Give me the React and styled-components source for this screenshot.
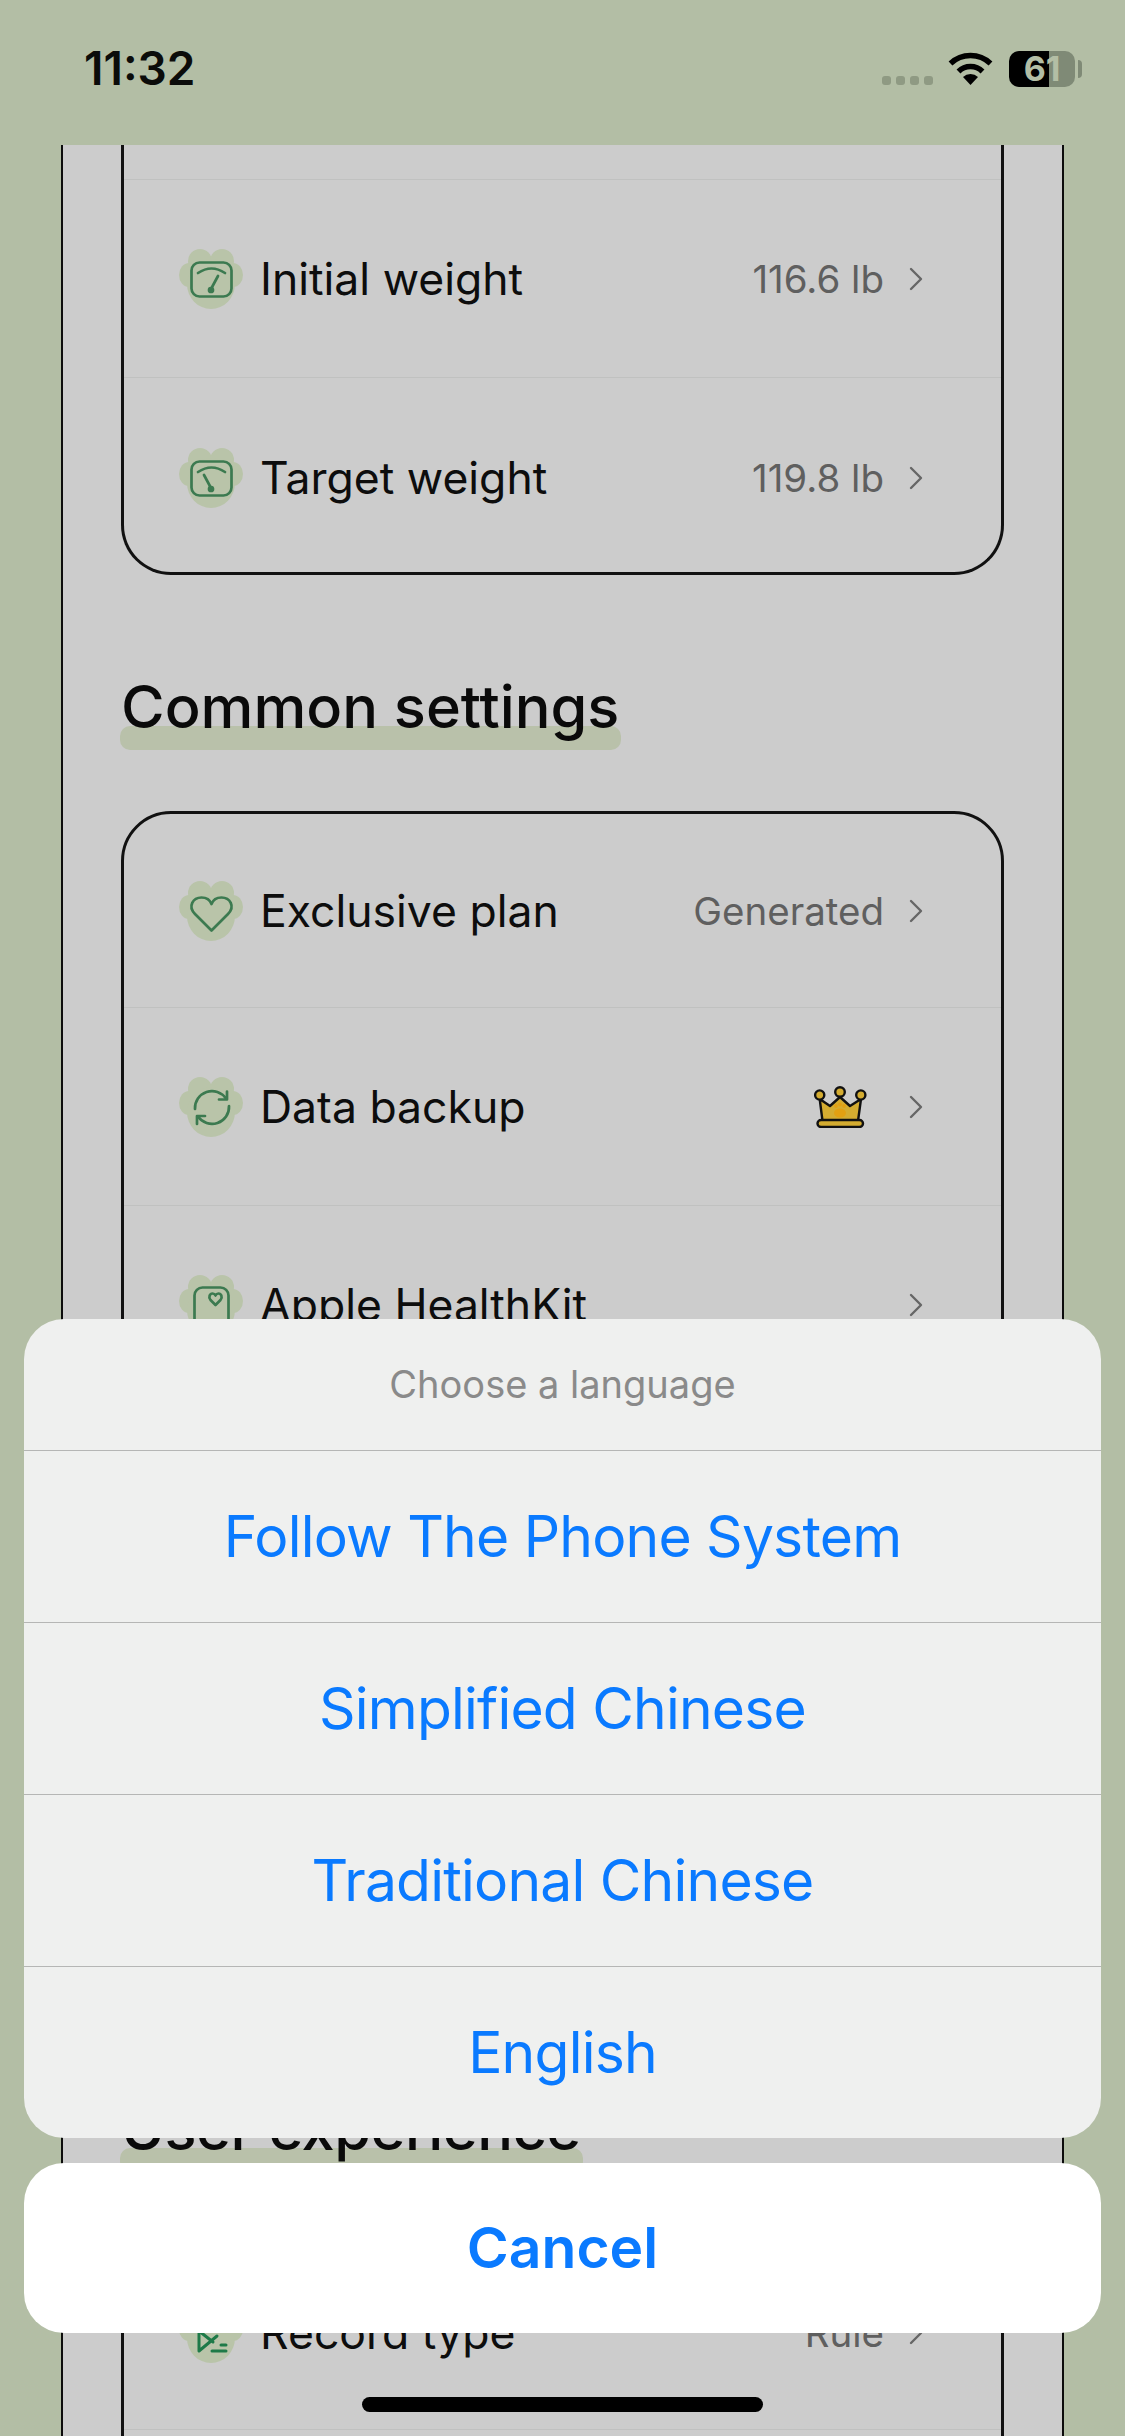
import React from 'react'
import styled, { createGlobalStyle } from 'styled-components'

const GlobalStyle = createGlobalStyle`
  html, body {
    margin: 0;
    padding: 0;
    background: #b3bea5;
  }
  * {
    box-sizing: border-box;
  }
`

const Screen = styled.div`
  position: relative;
  width: 1125px;
  height: 2436px;
  overflow: hidden;
  display: flex;
  flex-direction: column;
  background: #b3bea5;
  font-family: Inter, sans-serif;
`

const StatusBar = styled.div`
  flex: none;
  height: 145px;
  padding: 41px 50px 0 84px;
  display: flex;
  justify-content: space-between;
  align-items: flex-start;
`

const Clock = styled.div`
  font-size: 46px;
  line-height: 54px;
  font-weight: 600;
  color: #0b0c0a;
`

const StatusIcons = styled.div`
  display: flex;
  align-items: flex-start;
  padding-top: 10px;
`

const SignalDots = styled.div`
  display: flex;
  gap: 5px;
  margin: 25px 15px 0 0;
`

const SignalDot = styled.span`
  width: 9px;
  height: 9px;
  border-radius: 3px;
  background: #8f9a83;
`

const Battery = styled.div`
  position: relative;
  width: 66px;
  height: 36px;
  margin-left: 16px;
  border-radius: 10px;
  background: linear-gradient(90deg, #000 0 40px, #7f8a76 40px 100%);
  color: #b3bea5;
  font-size: 34px;
  line-height: 36px;
  font-weight: 700;
  text-align: center;

  &::after {
    content: '';
    position: absolute;
    right: -7px;
    top: 9px;
    width: 4px;
    height: 18px;
    border-radius: 0 4px 4px 0;
    background: #7f8a76;
  }
`

const Frame = styled.div`
  flex: 1;
  min-height: 0;
  overflow: hidden;
  margin: 0 61px;
  padding: 0 58px;
  background: #cccccc;
  border-left: 2px solid #0c0c0c;
  border-right: 2px solid #0c0c0c;
`

const Card = styled.div`
  border: 3px solid #111;
  border-radius: 50px;
  ${p => p.$cutTop && `
    border-top: none;
    border-top-left-radius: 0;
    border-top-right-radius: 0;
    padding-top: 34px;
  `}
`

const Row = styled.div`
  height: ${p => (p.$first ? 193 : 198)}px;
  padding: 0 78px 0 55px;
  display: flex;
  align-items: center;
  border-top: ${p => (p.$first ? 'none' : '1px solid #c0c1c0')};

  &:last-child {
    height: 195px;
    padding-top: 6px;
  }
`

const HiddenRows = styled.div`
  height: 591px;
  border-top: 1px solid #c0c1c0;
`

const PawIcon = styled.svg`
  flex: none;
  width: 64px;
  height: 60px;
  margin-right: 17px;
`

const Label = styled.span`
  flex: 1;
  font-size: 44.5px;
  line-height: 60px;
  color: #0d0d0d;
`

const Value = styled.span`
  font-size: 38.5px;
  line-height: 50px;
  color: #5f5f5f;
  margin-right: 25px;
`

const Crown = styled.svg`
  flex: none;
  width: 53px;
  height: 42px;
  margin-right: 42px;
`

const Chevron = styled.svg`
  flex: none;
  width: 14px;
  height: 24px;
`

const Heading = styled.h2`
  position: relative;
  z-index: 0;
  width: fit-content;
  margin: 97px 0 71px;
  font-size: 59.5px;
  line-height: 68px;
  font-weight: 500;
  letter-spacing: ${p => (p.$tight ? '-0.5px' : '0')};
  color: #0a0a0a;

  &::after {
    content: '';
    position: absolute;
    z-index: -1;
    left: -1px;
    right: -2px;
    bottom: -10px;
    height: 24px;
    border-radius: 10px;
    background: #b9c1aa;
  }
`

const Overlay = styled.div`
  position: absolute;
  left: 24px;
  right: 24px;
  bottom: 103px;
  display: flex;
  flex-direction: column;
  gap: 25px;
  text-align: center;
`

const Sheet = styled.div`
  border-radius: 40px;
  overflow: hidden;
  background: #eff0ef;
`

const SheetTitle = styled.div`
  height: 131px;
  line-height: 131px;
  font-size: 38px;
  color: #8a8a8a;
`

const SheetOption = styled.div`
  height: 172px;
  line-height: 172px;
  font-size: 57px;
  letter-spacing: -0.8px;
  color: #0a7aff;
  border-top: 1px solid #b5b6b5;
`

const CancelButton = styled.div`
  height: 170px;
  line-height: 170px;
  border-radius: 40px;
  background: #fff;
  font-size: 57px;
  font-weight: 600;
  color: #0a7aff;
`

const HomeIndicator = styled.div`
  position: absolute;
  left: 362px;
  bottom: 24px;
  width: 401px;
  height: 15px;
  border-radius: 8px;
  background: #000;
`

const green = '#3c7a50'

const ScaleGlyph = ({ target }) => (
  <g fill="none" stroke={green} strokeWidth="2.7" strokeLinecap="round">
    <rect x="12.5" y="13.5" width="40" height="34" rx="8" />
    <path d="M19 24 Q32.5 15 46 24" />
    <path d={target ? 'M25 27 L32 40' : 'M39 27 L32 40'} />
    <circle cx="32" cy="41" r="2" fill={green} />
  </g>
)

const HeartGlyph = () => (
  <path
    d="M32.5 49.5 L16 33 C8.5 25.5 14 16.5 22.5 16.5 C27 16.5 31 19 32.5 23 C34 19 38 16.5 42.5 16.5 C51 16.5 56.5 25.5 49 33 Z"
    fill="none" stroke={green} strokeWidth="2.7" strokeLinejoin="round"
  />
)

const SyncGlyph = () => (
  <g fill="none" stroke={green} strokeWidth="2.7" strokeLinecap="round" strokeLinejoin="round">
    <path d="M16 32 A17 17 0 0 1 47 21.5" />
    <path d="M48 14.5 V22.5 H40" />
    <path d="M50 29 A17 17 0 0 1 19 39.5" />
    <path d="M18 47 V39 H26" />
  </g>
)

const HealthGlyph = () => (
  <g fill="none" stroke={green} strokeWidth="2.7" strokeLinejoin="round">
    <rect x="15.5" y="12.5" width="34" height="40" rx="8" />
    <path d="M36.5 30 L31.5 25 C29 22 31 18.5 33.5 18.5 C35 18.5 36 19.5 36.5 20.5 C37 19.5 38 18.5 39.5 18.5 C42 18.5 44 22 41.5 25 Z" />
  </g>
)

const RecordGlyph = () => (
  <g fill="none" stroke="#1e7a48" strokeWidth="3" strokeLinecap="round" strokeLinejoin="round">
    <path d="M20 28 L34 39" />
    <path d="M38 33 L20 48 V28" />
    <path d="M33 48 H47" />
    <path d="M42 42 H47" />
  </g>
)

const Paw = ({ children }) => (
  <PawIcon viewBox="0 0 64 60">
    <g fill="#b9c4a9">
      <ellipse cx="21" cy="12" rx="12" ry="12" />
      <ellipse cx="43" cy="12" rx="12" ry="12" />
      <ellipse cx="10" cy="26" rx="10" ry="12" />
      <ellipse cx="54" cy="26" rx="10" ry="12" />
      <ellipse cx="32" cy="35" rx="24" ry="25" />
    </g>
    {children}
  </PawIcon>
)

const CrownIcon = () => (
  <Crown viewBox="0 0 53 42">
    <path
      d="M5.7 13 L8.5 35 H44 L47 13 L36 20 L26 11 L16 20 Z"
      fill="#d4ac30" stroke="#111" strokeWidth="2.4" strokeLinejoin="round"
    />
    <g fill="#d4ac30" stroke="#111" strokeWidth="2.4">
      <circle cx="5.7" cy="9" r="4.6" />
      <circle cx="26" cy="6" r="4.8" />
      <circle cx="46.8" cy="9" r="4.6" />
      <rect x="3.5" y="34" width="45.5" height="7" rx="3.5" />
    </g>
    <g fill="#e2a012">
      <ellipse cx="26" cy="27" rx="6" ry="4.5" />
      <circle cx="22" cy="20" r="1.9" />
      <circle cx="26" cy="18.5" r="1.9" />
      <circle cx="30" cy="20" r="1.9" />
    </g>
  </Crown>
)

const ChevronIcon = () => (
  <Chevron viewBox="0 0 14 24">
    <path d="M2 2 L12 12 L2 22" fill="none" stroke="#666" strokeWidth="2.4" strokeLinecap="round" strokeLinejoin="round" />
  </Chevron>
)

const SettingRow = ({ first, glyph, label, value, crown }) => (
  <Row $first={first}>
    <Paw>{glyph}</Paw>
    <Label>{label}</Label>
    {value && <Value>{value}</Value>}
    {crown && <CrownIcon />}
    <ChevronIcon />
  </Row>
)

const languages = ['Follow The Phone System', 'Simplified Chinese', 'Traditional Chinese', 'English']

export default function App() {
  return (
    <Screen>
      <GlobalStyle />
      <StatusBar>
        <Clock>11:32</Clock>
        <StatusIcons>
          <SignalDots>
            <SignalDot /><SignalDot /><SignalDot /><SignalDot />
          </SignalDots>
          <svg width="45" height="34" viewBox="0 0 45 34">
            <g fill="none" stroke="#000" strokeWidth="5.5">
              <path d="M2.5 12.5 A29 29 0 0 1 42.5 12.5" />
              <path d="M10.5 20.5 A17 17 0 0 1 34.5 20.5" />
            </g>
            <path d="M22.5 34 L15 26 A11 11 0 0 1 30 26 Z" fill="#000" />
          </svg>
          <Battery>61</Battery>
        </StatusIcons>
      </StatusBar>

      <Frame>
        <Card $cutTop>
          <SettingRow glyph={<ScaleGlyph />} label="Initial weight" value="116.6 lb" />
          <SettingRow glyph={<ScaleGlyph target />} label="Target weight" value="119.8 lb" />
        </Card>

        <Heading>Common settings</Heading>
        <Card>
          <SettingRow first glyph={<HeartGlyph />} label="Exclusive plan" value="Generated" />
          <SettingRow glyph={<SyncGlyph />} label="Data backup" crown />
          <SettingRow glyph={<HealthGlyph />} label="Apple HealthKit" />
          <HiddenRows />
        </Card>

        <Heading $tight>User experience</Heading>
        <Card>
          <SettingRow first glyph={<RecordGlyph />} label="Record type" value="Rule" />
          <Row />
        </Card>
      </Frame>

      <Overlay>
        <Sheet>
          <SheetTitle>Choose a language</SheetTitle>
          {languages.map(name => <SheetOption key={name}>{name}</SheetOption>)}
        </Sheet>
        <CancelButton>Cancel</CancelButton>
      </Overlay>
      <HomeIndicator />
    </Screen>
  )
}
